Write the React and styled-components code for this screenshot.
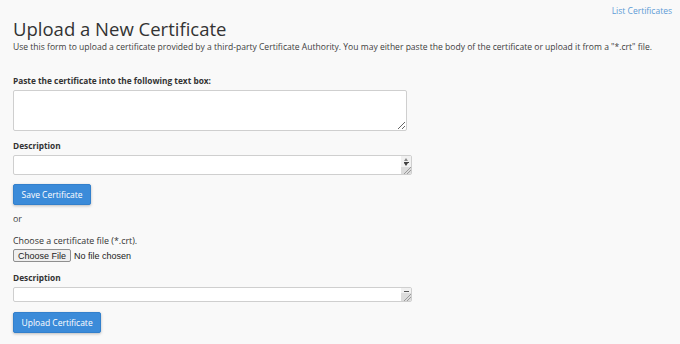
import styled, { createGlobalStyle } from 'styled-components'

const GlobalStyle = createGlobalStyle`
  html, body {
    margin: 0;
    padding: 0;
    background: #f9f9f9;
  }
  body {
    font-family: 'Open Sans', 'Liberation Sans', sans-serif;
    color: #333;
  }
`

const Page = styled.div`
  width: 680px;
  height: 344px;
  box-sizing: border-box;
  padding: 0 13px;
  overflow: hidden;
`

const TopBar = styled.div`
  display: flex;
  justify-content: flex-end;
  padding-top: 5px;
  height: 12px;
`

const ListLink = styled.a`
  font-size: 8.5px;
  line-height: 12px;
  color: #5d9bd6;
  text-decoration: none;
  margin-right: -5px;
`

const Title = styled.h1`
  font-size: 18.5px;
  font-weight: 400;
  margin: 0;
  line-height: 24px;
  color: #333;
`

const Intro = styled.p`
  font-size: 8.55px;
  margin: 0;
  color: #3d3d3d;
`

const Form = styled.form`
  display: flex;
  flex-direction: column;
  margin-top: 22px;
`

const Label = styled.label`
  font-size: ${({ $bold }) => ($bold ? 8.3 : 8.9)}px;
  font-weight: ${({ $bold }) => ($bold ? 700 : 400)};
  color: #333;
  line-height: 12px;
`

const Field = styled.div`
  display: flex;
  flex-direction: column;
  gap: ${({ $gap }) => $gap ?? 3}px;
  margin-bottom: ${({ $mb }) => $mb || 0}px;
`

const TextArea = styled.textarea`
  width: ${({ $w }) => $w}px;
  height: ${({ $h }) => $h}px;
  box-sizing: border-box;
  border: 1px solid #cfcfcf;
  border-radius: 2px;
  background: #fff;
  font-family: inherit;
  font-size: 9px;
  margin: 0;
`

// single-line description box with a classic scroll gutter on the right
const ScrollBox = styled.div`
  display: flex;
  width: ${({ $w }) => $w}px;
  height: ${({ $h }) => $h}px;
  box-sizing: border-box;
  border: 1px solid #cfcfcf;
  border-radius: 2px;
  background: #fff;
  overflow: hidden;
`

const PlainArea = styled.textarea`
  flex: 1;
  border: none;
  outline: none;
  resize: none;
  overflow: hidden;
  background: transparent;
  font-family: inherit;
  font-size: 9px;
  margin: 0;
  padding: 2px;
`

const Gutter = styled.div`
  width: 10px;
  display: flex;
  flex-direction: column;
  align-items: center;
  background: #f1f1f1;
`

const Arrow = styled.span`
  flex: none;
  width: 0;
  height: 0;
  margin-top: ${({ $mt }) => $mt || 0}px;
  border-left: 2.5px solid transparent;
  border-right: 2.5px solid transparent;
  ${({ $down, $color }) =>
    $down
      ? `border-top: 3px solid ${$color};`
      : `border-bottom: 3px solid ${$color};`}
`

const Bar = styled.span`
  flex: none;
  width: 5px;
  height: 1px;
  margin-top: ${({ $mt }) => $mt ?? 1}px;
  background: ${({ $color }) => $color || '#404040'};
`

const Grip = styled.div`
  flex: 1;
  align-self: stretch;
  margin-top: 1px;
  background-color: #dcdcdc;
  background-image: linear-gradient(
    135deg,
    transparent 0 58%,
    #9a9a9a 58% 63%,
    transparent 63% 76%,
    #9a9a9a 76% 81%,
    transparent 81%
  );
`

const Button = styled.button`
  align-self: flex-start;
  background: #3b8bd9;
  color: #fff;
  border: 1px solid #3380cc;
  border-radius: 2px;
  font-family: inherit;
  font-size: 8.5px;
  height: 21px;
  padding: 0 7.5px;
  box-shadow: 0 1px 3px rgba(0, 0, 0, 0.25);
  cursor: pointer;
`

const Or = styled.div`
  font-size: 8.9px;
  line-height: 12px;
  color: #444;
  margin: 8px 0 10px;
`

const FileRow = styled.div`
  display: flex;
  align-items: center;
  gap: 3px;
  font-family: 'Liberation Sans', Arial, sans-serif;
  font-size: 9px;
  color: #222;
`

const FileButton = styled.span`
  display: inline-flex;
  align-items: center;
  box-sizing: border-box;
  height: 13px;
  padding: 0 4px;
  border: 1px solid #8f8f8f;
  border-radius: 2px;
  background: #efefef;
`

const DescriptionBox = ({ height, compact }) => (
  <ScrollBox $w={399} $h={height}>
    <PlainArea />
    <Gutter>
      {compact ? (
        <Bar $mt={3} $color="#555" />
      ) : (
        <>
          <Arrow $mt={2} $color="#8a8a8a" />
          <Bar />
          <Arrow $down $color="#404040" />
        </>
      )}
      <Grip />
    </Gutter>
  </ScrollBox>
)

export default function App() {
  return (
    <Page>
      <GlobalStyle />
      <TopBar>
        <ListLink href="#">List Certificates</ListLink>
      </TopBar>
      <Title>Upload a New Certificate</Title>
      <Intro>
        Use this form to upload a certificate provided by a third-party Certificate Authority. You may either paste
        the body of the certificate or upload it from a "*.crt" file.
      </Intro>
      <Form>
        <Field $mb={9}>
          <Label $bold>Paste the certificate into the following text box:</Label>
          <TextArea $w={394} $h={41} />
        </Field>
        <Field $mb={9}>
          <Label $bold>Description</Label>
          <DescriptionBox height={20} />
        </Field>
        <Button type="button">Save Certificate</Button>
        <Or>or</Or>
        <Field $gap={2} $mb={10}>
          <Label>Choose a certificate file (*.crt).</Label>
          <FileRow>
            <FileButton>Choose File</FileButton>
            No file chosen
          </FileRow>
        </Field>
        <Field $mb={10}>
          <Label $bold>Description</Label>
          <DescriptionBox height={15} compact />
        </Field>
        <Button type="button">Upload Certificate</Button>
      </Form>
    </Page>
  )
}
